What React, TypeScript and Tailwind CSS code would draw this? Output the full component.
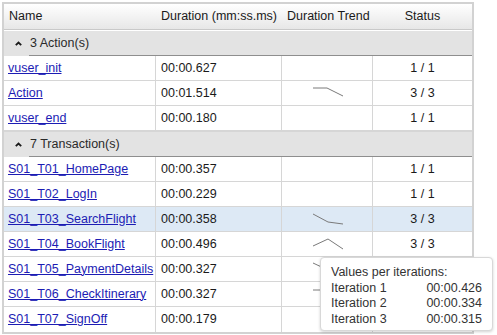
import React from 'react';

type Item = { name: string; duration: string; status: string; trend?: string; highlight?: boolean };

const GROUPS: { label: string; items: Item[] }[] = [
  {
    label: '3 Action(s)',
    items: [
      { name: 'vuser_init', duration: '00:00.627', status: '1 / 1' },
      { name: 'Action', duration: '00:01.514', status: '3 / 3', trend: '31,7 45,7 61,15' },
      { name: 'vuser_end', duration: '00:00.180', status: '1 / 1' },
    ],
  },
  {
    label: '7 Transaction(s)',
    items: [
      { name: 'S01_T01_HomePage', duration: '00:00.357', status: '1 / 1' },
      { name: 'S01_T02_LogIn', duration: '00:00.229', status: '1 / 1' },
      {
        name: 'S01_T03_SearchFlight',
        duration: '00:00.358',
        status: '3 / 3',
        trend: '31,7 46,15 61,17',
        highlight: true,
      },
      { name: 'S01_T04_BookFlight', duration: '00:00.496', status: '3 / 3', trend: '31,14 46,7 61,17' },
      { name: 'S01_T05_PaymentDetails', duration: '00:00.327', status: '3 / 3', trend: '31,6 46,13 61,15' },
      { name: 'S01_T06_CheckItinerary', duration: '00:00.327', status: '3 / 3', trend: '31,8 46,8 61,9' },
      { name: 'S01_T07_SignOff', duration: '00:00.179', status: '1 / 1' },
    ],
  },
];

const ITERATIONS = [
  ['Iteration 1', '00:00.426'],
  ['Iteration 2', '00:00.334'],
  ['Iteration 3', '00:00.315'],
];

function Sparkline({ points }: { points: string }) {
  return (
    <svg width="90" height="24" viewBox="0 0 90 24">
      <polyline points={points} fill="none" stroke="#7a7a7a" strokeWidth="1" />
    </svg>
  );
}

function DataRow({ item, last }: { item: Item; last: boolean }) {
  return (
    <div
      className={`flex h-[25px] ${last ? '' : 'border-b border-[#d6d6d6]'} ${
        item.highlight ? 'bg-[#dde9f5]' : 'bg-white'
      }`}
    >
      <div className="flex w-[152px] items-center whitespace-nowrap border-r border-[#d6d6d6] pl-[4px]">
        <a className="text-[#1c1cb4] underline" href="#">
          {item.name}
        </a>
      </div>
      <div className="flex w-[126px] items-center border-r border-[#d6d6d6] pl-[5px] text-[#1a1a1a]">
        {item.duration}
      </div>
      <div className="w-[91px] border-r border-[#d6d6d6]">
        {item.trend && <Sparkline points={item.trend} />}
      </div>
      <div className="flex flex-1 items-center justify-center text-[#1a1a1a]">{item.status}</div>
    </div>
  );
}

export default function App() {
  return (
    <div className="min-h-[335px] bg-white pl-[2px] pt-[2px] font-['Liberation_Sans',Arial,sans-serif] text-[12.5px]">
      <div className="relative w-[472px] border-2 border-[#d2d2d2]">
        <div className="flex h-[26px] whitespace-nowrap border-b border-[#c9c9c9] bg-gradient-to-b from-white to-[#e7e7e7] text-[#1a1a1a]">
          <div className="flex w-[152px] items-center pl-[5px]">Name</div>
          <div className="flex w-[126px] items-center pl-[5px]">Duration (mm:ss.ms)</div>
          <div className="flex w-[91px] items-center pl-[5px]">Duration Trend</div>
          <div className="flex flex-1 items-center justify-center">Status</div>
        </div>
        <div className="h-[1px] bg-white" />

        {GROUPS.map((group, gi) => (
          <div key={group.label}>
            <div className={`bg-[#e3e3e3] ${gi > 0 ? 'border-t border-[#d6d6d6]' : ''}`}>
              <div className="flex h-[24px] items-center text-[#2a2a2a]">
                <svg className="ml-[11px] mr-[8px]" width="7" height="5" viewBox="0 0 7 5">
                  <polyline points="0.8,4.2 3.5,1.5 6.2,4.2" fill="none" stroke="#1a1a1a" strokeWidth="1.8" />
                </svg>
                {group.label}
              </div>
              <div className="ml-[25px] h-[1px] bg-[#8e8e8e]" />
            </div>
            {group.items.map((item, i) => (
              <DataRow
                item={item}
                key={item.name}
                last={gi === GROUPS.length - 1 && i === group.items.length - 1}
              />
            ))}
          </div>
        ))}

        <div className="absolute left-[316px] top-[253px] w-[173px] rounded-[4px] border border-[#d8d8d8] bg-white px-[10px] pb-[3px] pt-[7px] text-[12.5px] leading-[15.5px] text-[#333] shadow-[0_1px_3px_rgba(0,0,0,0.18)]">
          <div>Values per iterations:</div>
          {ITERATIONS.map(([label, value]) => (
            <div className="flex justify-between" key={label}>
              <span>{label}</span>
              <span>{value}</span>
            </div>
          ))}
        </div>
      </div>
    </div>
  );
}
